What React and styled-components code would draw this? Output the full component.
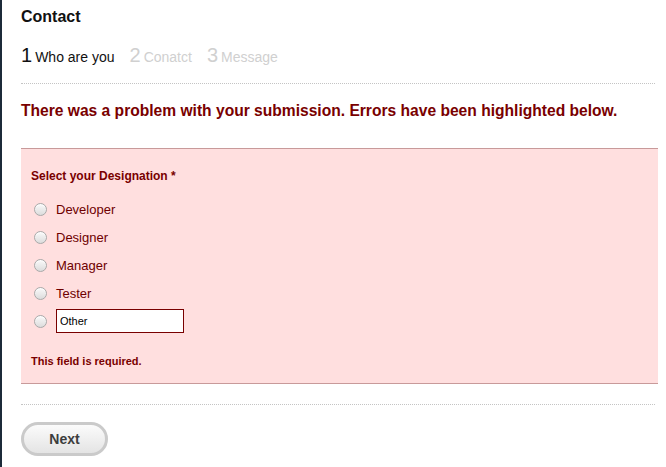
import React from 'react';
import styled, { createGlobalStyle } from 'styled-components';

const GlobalStyle = createGlobalStyle`
  html, body {
    margin: 0;
    padding: 0;
    background: #fff;
    font-family: "Liberation Sans", Arial, sans-serif;
  }
`;

const Page = styled.div`
  width: 666px;
  height: 467px;
  box-sizing: border-box;
  border-left: 2px solid #1c2a39;
  padding: 0 8px 0 19px;
  overflow: hidden;
`;

const Title = styled.h3`
  margin: 0;
  padding-top: 7px;
  font-size: 16px;
  line-height: 20px;
  font-weight: bold;
  color: #111;
`;

const Steps = styled.div`
  display: flex;
  align-items: baseline;
  gap: 15px;
  margin-top: 17px;
  padding-bottom: 16px;
  border-bottom: 1px dotted #c4c4c4;
  width: 634px;
`;

const Step = styled.span`
  display: inline-flex;
  align-items: baseline;
  gap: 3px;
  font-size: 14px;
  color: ${p => (p.$active ? '#111' : '#d0d0d0')};

  b {
    font-weight: normal;
    font-size: 20px;
  }
`;

const ErrorHeading = styled.div`
  margin-top: 17px;
  font-size: 15.6px;
  line-height: 20px;
  font-weight: bold;
  color: #790000;
`;

const ErrorBox = styled.div`
  margin-top: 27px;
  width: 637px;
  box-sizing: border-box;
  background: #ffdfdf;
  border-top: 1px solid #c89a9a;
  border-bottom: 1px solid #c89a9a;
  padding: 19px 10px 15px 10px;
  color: #790000;
`;

const Label = styled.div`
  font-size: 12px;
  font-weight: bold;
  line-height: 16px;
  margin-bottom: 17px;
`;

const Options = styled.div`
  display: flex;
  flex-direction: column;
  gap: 12px;
`;

const Option = styled.label`
  display: flex;
  align-items: center;
  height: 16px;
  font-size: 13px;
  color: #6e0000;
`;

const Radio = styled.span`
  width: 11px;
  height: 11px;
  margin: 0 9px 0 3px;
  border-radius: 50%;
  border: 1px solid #a9a9a9;
  background: linear-gradient(#fafafa, #dcdcdc);
  box-shadow: inset 0 1px 1px rgba(255, 255, 255, 0.8);
  flex: none;
`;

const OtherInput = styled.input`
  width: 128px;
  height: 24px;
  box-sizing: border-box;
  border: 1px solid #790000;
  background: #fff;
  padding: 0 3px;
  font-family: "Liberation Sans", Arial, sans-serif;
  font-size: 11px;
  color: #000;
  outline: none;
`;

const FieldError = styled.div`
  margin-top: 25px;
  font-size: 11px;
  font-weight: bold;
  line-height: 14px;
`;

const Footer = styled.div`
  margin-top: 20px;
  width: 634px;
  border-top: 1px dotted #c4c4c4;
  padding-top: 17px;
`;

const NextButton = styled.button`
  width: 87px;
  height: 34px;
  border-radius: 17px;
  border: 3px solid #cacaca;
  background: linear-gradient(#fbfbfb, #e4e4e4);
  font-family: "Liberation Sans", Arial, sans-serif;
  font-size: 14px;
  font-weight: bold;
  color: #3d3d3d;
  cursor: pointer;
`;

const options = ['Developer', 'Designer', 'Manager', 'Tester'];

export default function App() {
  return (
    <Page>
      <GlobalStyle />
      <Title>Contact</Title>
      <Steps>
        <Step $active><b>1</b>Who are you</Step>
        <Step><b>2</b>Conatct</Step>
        <Step><b>3</b>Message</Step>
      </Steps>
      <ErrorHeading>
        There was a problem with your submission. Errors have been highlighted below.
      </ErrorHeading>
      <ErrorBox>
        <Label>Select your Designation *</Label>
        <Options>
          {options.map(o => (
            <Option key={o}>
              <Radio />
              {o}
            </Option>
          ))}
          <Option>
            <Radio />
            <OtherInput defaultValue="Other" />
          </Option>
        </Options>
        <FieldError>This field is required.</FieldError>
      </ErrorBox>
      <Footer>
        <NextButton>Next</NextButton>
      </Footer>
    </Page>
  );
}
